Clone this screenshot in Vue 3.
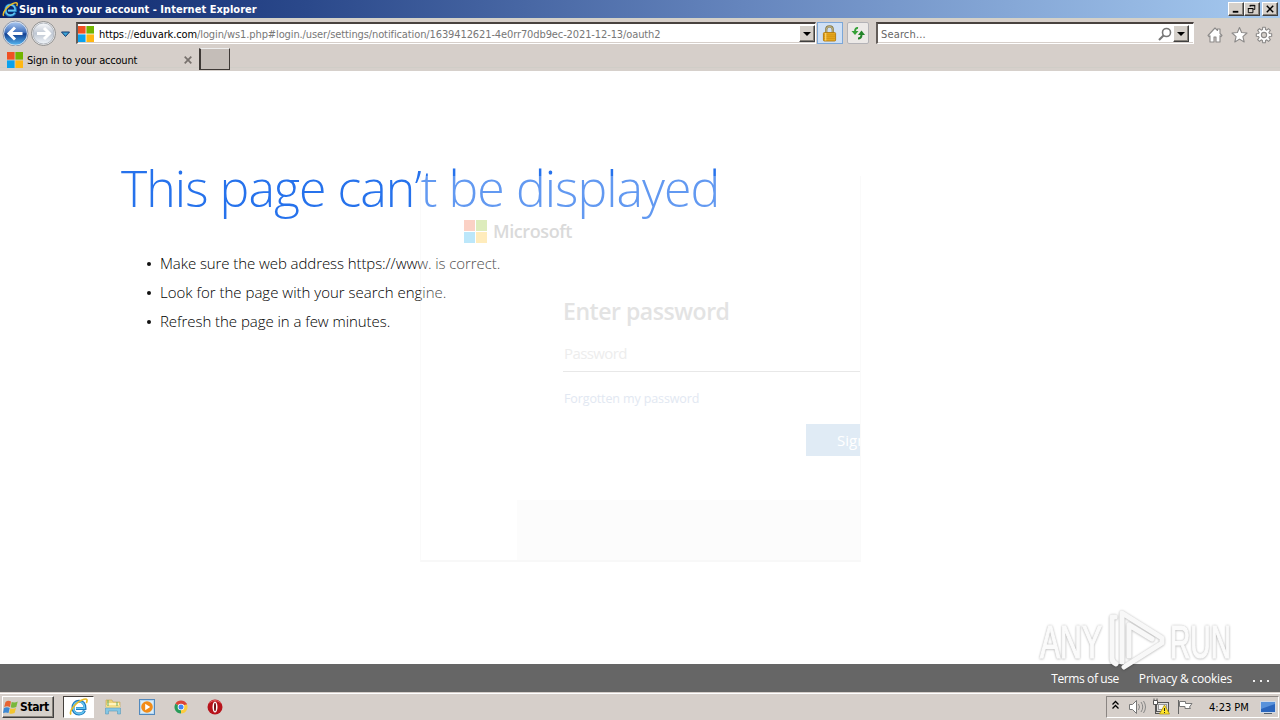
<template>
  <div class="desktop">
    <header class="titlebar">
      <svg class="title-ie" viewBox="0 0 20 20"><use href="#ie" /></svg>
      <span class="title-text">Sign in to your account - Internet Explorer</span>
      <div class="window-buttons">
        <button class="win-btn"><svg viewBox="0 0 15 13"><path d="M4 9.500h6" stroke="#000" stroke-width="2" /></svg></button>
        <button class="win-btn"><svg viewBox="0 0 15 13"><path d="M5.500 4V2.500h5v4.500H9M5 3h6M3.500 6v4.500h5V6zM3 6h6" fill="none" stroke="#000" /></svg></button>
        <button class="win-btn close"><svg viewBox="0 0 15 13"><path d="M4 3l7 7M11 3l-7 7" stroke="#000" stroke-width="1.600" /></svg></button>
      </div>
    </header>

    <nav class="toolbar">
      <svg class="nav-arrows" viewBox="0 0 76 28">
        <defs>
          <linearGradient id="back" x1="0" y1="0" x2="0" y2="1">
            <stop offset="0" stop-color="#a9c6ee" />
            <stop offset=".45" stop-color="#3f70bd" />
            <stop offset=".52" stop-color="#123f91" />
            <stop offset="1" stop-color="#56b4ee" />
          </linearGradient>
          <linearGradient id="forward" x1="0" y1="0" x2="0" y2="1">
            <stop offset="0" stop-color="#fafbfd" />
            <stop offset=".5" stop-color="#bfc7d3" />
            <stop offset="1" stop-color="#f1f5f9" />
          </linearGradient>
        </defs>
        <circle cx="15.500" cy="15.500" r="12.500" fill="#eef2f8" stroke="#8c96a8" />
        <circle cx="15.500" cy="15.500" r="11.300" fill="url(#back)" />
        <path d="M22.500 15.500H9.500M15 9.500l-6 6 6 6" fill="none" stroke="#fff" stroke-width="3" />
        <circle cx="43.500" cy="15.500" r="12" fill="#f4f4f4" stroke="#8d8d8d" />
        <circle cx="43.500" cy="15.500" r="10.500" fill="url(#forward)" stroke="#b3b8c0" />
        <path d="M37 15.500h12M44 10l5.500 5.500L44 21" fill="none" stroke="#fff" stroke-width="3" />
        <path d="M61.500 14h8l-4 4.500z" fill="#3aa3d6" stroke="#143b70" />
      </svg>
      <div class="address">
        <svg class="ms" viewBox="0 0 16 16"><use href="#ms" /></svg>
        <span class="url"><b>https</b>://<b>eduvark.com</b>/login/ws1.php#login./user/settings/notification/1639412621-4e0rr70db9ec-2021-12-13/oauth2</span>
        <button class="drop"><i></i></button>
      </div>
      <div class="lock">
        <svg viewBox="0 0 16 18">
          <path d="M4.500 9V5q0-3.500 3.500-3.500T11.500 5v4" fill="none" stroke="#857849" stroke-width="2.400" />
          <path d="M4.500 9V5q0-3.500 3.500-3.500T11.500 5v4" fill="none" stroke="#d8cd98" stroke-width=".8" />
          <rect x="1.500" y="8" width="13" height="9" rx="1" fill="#e9ab20" stroke="#b27b10" />
          <path d="M2 10.500h12M2 12.500h12M2 14.500h12" stroke="#c8870b" stroke-width=".7" />
          <path d="M4 8.500v8" stroke="#ffe18c" />
        </svg>
      </div>
      <div class="refresh">
        <svg viewBox="0 0 16 16">
          <path d="M8 3Q5 2.500 5 7" fill="none" stroke="#35a137" stroke-width="2" />
          <path d="M1.500 6h7L5 10z" fill="#35a137" />
          <path d="M8 13.500q3.500 0 3.500-4" fill="none" stroke="#228429" stroke-width="2" />
          <path d="M8 10h7l-3.500-4.500z" fill="#228429" />
        </svg>
      </div>
      <div class="search">
        <span>Search...</span>
        <svg class="magnifier" viewBox="0 0 14 14"><circle cx="8.500" cy="5.500" r="4" fill="none" stroke="#777" stroke-width="1.600" /><path d="M5.500 8.500L1 13" stroke="#777" stroke-width="2.200" /></svg>
        <button class="drop"><i></i></button>
      </div>
      <svg class="commands" viewBox="0 0 66 18">
        <g fill="#fff" stroke="#8b8988" stroke-width="1.100" stroke-linejoin="round">
          <path d="M1 9.500L8 2l2.500 2.500V3h2.500v4.500l2 2-1 1.200-1-1V16h-4v-5H7v5H3V9.700l-1 1z" />
          <path d="M32.500 1.500l2.100 5 5.400.5-4.100 3.600 1.300 5.400-4.700-2.900-4.700 2.900 1.300-5.400L25 7l5.400-.5z" />
          <path :d="gearPath" />
          <circle cx="57" cy="9" r="2.600" fill="#d5d0ca" />
        </g>
      </svg>
    </nav>

    <div class="tabs">
      <div class="tab">
        <svg class="ms" viewBox="0 0 16 16"><use href="#ms" /></svg>
        <span>Sign in to your account</span>
        <svg class="tab-close" viewBox="0 0 8 8"><path d="M.7.7l6.600 6.600M7.300.7L.7 7.300" stroke="#77716d" stroke-width="1.700" /></svg>
      </div>
      <div class="new-tab"></div>
    </div>

    <main class="page">
      <h1>This page can’t be displayed</h1>
      <ul>
        <li v-for="tip in tips" :key="tip">{{ tip }}</li>
      </ul>

      <section class="login">
        <div class="brand">
          <svg viewBox="0 0 23 23">
            <path fill="#f25022" d="M0 0h11v11H0z" />
            <path fill="#7fba00" d="M12 0h11v11H12z" />
            <path fill="#00a4ef" d="M0 12h11v11H0z" />
            <path fill="#ffb900" d="M12 12h11v11H12z" />
          </svg>
          <span>Microsoft</span>
        </div>
        <div class="form">
          <h2>Enter password</h2>
          <div class="field"><span>Password</span></div>
          <a class="forgot">Forgotten my password</a>
          <div class="submit">Sign in</div>
        </div>
        <div class="panel"></div>
      </section>

      <div class="watermark">
        <svg viewBox="0 0 200 70">
          <g class="mark-text">
            <text x="3" y="52" textLength="62" lengthAdjust="spacingAndGlyphs">ANY</text>
            <text x="133" y="52" textLength="61" lengthAdjust="spacingAndGlyphs">RUN</text>
          </g>
          <g class="mark-play">
            <path d="M78 11h-3v41q0 4 4 6" />
            <path d="M115 33L92 19v31" />
            <path d="M85 56V7l40 25v5L87 61" />
          </g>
        </svg>
      </div>
    </main>

    <footer class="links">
      <span class="terms">Terms of use</span>
      <span class="privacy">Privacy &amp; cookies</span>
      <span class="more"><i></i><i></i><i></i></span>
    </footer>

    <div class="taskbar">
      <button class="start">
        <svg viewBox="0 0 16 16">
          <path d="M2.500 3Q5 1 8 2.500L7 8Q4 6.500 1.200 8z" fill="#e86432" />
          <path d="M8.700 3q3 1.200 6-.5L13.300 8q-3 1.500-5.600.3z" fill="#78b83c" />
          <path d="M1 9q3-1.500 5.700 0l-1.200 5Q3 13 0 14z" fill="#3c88d3" />
          <path d="M7.400 9.300q3 1.200 5.600-.3l-1.400 5q-3 1.500-5.400.3z" fill="#f3c52f" />
        </svg>
        <span>Start</span>
      </button>
      <div class="task active"><svg viewBox="0 0 20 20"><use href="#ie" /></svg></div>
      <div class="task">
        <svg viewBox="0 0 20 20">
          <path d="M3 5V3h6l1 2h7v5H3z" fill="#efd479" stroke="#c8a54b" stroke-width=".6" />
          <path d="M4 6h12v2H4z" fill="#fff4bf" />
          <path d="M3 8h14v4H3z" fill="#f5de8a" />
          <path d="M2.500 11h15v6h-3v-3h-9v3h-3z" fill="#83c6e5" stroke="#5b9abb" stroke-width=".6" />
          <path d="M5 3v6M14 5v4" stroke="#68ad65" />
        </svg>
      </div>
      <div class="task">
        <svg viewBox="0 0 20 20">
          <rect x="2.500" y="2.500" width="15" height="15" fill="#b7d8f2" stroke="#5289bd" />
          <rect x="4" y="4" width="12" height="12" fill="#d9edf9" />
          <circle cx="10" cy="10" r="5.800" fill="#f28c18" />
          <path d="M8.200 6.800v6.400l5-3.200z" fill="#fff" />
        </svg>
      </div>
      <div class="task">
        <svg viewBox="0 0 20 20">
          <path d="M10 10L4.370 6.750A6.500 6.500 0 0 1 15.630 6.750z" fill="#dc4437" />
          <path d="M10 10L15.630 6.750A6.500 6.500 0 0 1 10 16.500z" fill="#fccc3f" />
          <path d="M10 10v6.500A6.500 6.500 0 0 1 4.370 6.750z" fill="#289b58" />
          <path d="M10 7h5.700" stroke="#dc4437" stroke-width="1.300" />
          <circle cx="10" cy="10" r="3.300" fill="#fff" />
          <circle cx="10" cy="10" r="2.500" fill="#4285f4" />
        </svg>
      </div>
      <div class="task">
        <svg viewBox="0 0 20 20"><circle cx="10" cy="10" r="7.500" fill="#b7131b" /><path d="M4 6q6-5 12 0" fill="none" stroke="#e66164" /><ellipse cx="10" cy="10" rx="2.500" ry="5.500" fill="#fff" /><ellipse cx="10" cy="10" rx="1" ry="4.200" fill="#6e1014" /></svg>
      </div>

      <div class="tray">
        <svg viewBox="0 0 88 18">
          <path d="M5.500 6.500l3-3 3 3M5.500 10.500l3-3 3 3" fill="none" stroke="#000" stroke-width="1.300" />
          <path d="M22.500 6.500h3l4-4v13l-4-4h-3z" fill="#fff" stroke="#777" />
          <path d="M31.500 6q2 3 0 6M34 4q3.500 5 0 10M36.500 3q4 6 0 12" fill="none" stroke="#888" />
          <rect x="49.500" y="4.500" width="12" height="9" fill="#ddd" stroke="#555" />
          <rect x="51.500" y="6.500" width="8" height="5" fill="#f5f5f5" stroke="#999" />
          <path d="M46.500 2.500h4v4h-4zM48.500 6.500v9M47 .5v2M50 .5v2M48 15.500h9" fill="#fff" stroke="#555" />
          <path d="M57.500 7l5 9h-10z" fill="#ffe52c" stroke="#aa8a00" stroke-width=".7" />
          <path d="M57.500 10v3M57.500 14v1" stroke="#222" />
          <path d="M71.500 2v14" stroke="#666" />
          <path d="M72.500 3.500h6v2h6.500l-2.500 3.500 1 1.500h-5.500v-2h-5.500z" fill="#fff" stroke="#777" />
        </svg>
        <span class="clock">4:23 PM</span>
        <svg class="monitor" viewBox="0 0 16 16"><rect x=".5" y="2.500" width="15" height="11" fill="#2b66bd" stroke="#d1dae6" /><path d="M1 3h14v2L1 10z" fill="#5892db" /><path d="M4 14.500h8" stroke="#55616d" /></svg>
      </div>
    </div>

    <!-- shared icons -->
    <svg class="sprite">
      <symbol id="ie" viewBox="0 0 20 20">
        <path d="M15.500 13.500c-1 2.200-2.900 3.500-5.500 3.500-3.800 0-6-2.600-6-6.200C4 7 6.500 4.300 10 4.300c3.900 0 6.200 2.800 6 7.200H7" fill="none" stroke="#1b78bd" stroke-width="3" />
        <path d="M15 14c-1 1.800-2.700 2.700-5 2.700-3.300 0-5.600-2.400-5.600-6 0-3.500 2.200-6 5.600-6 3.500 0 5.500 2.500 5.500 6.500H7" fill="none" stroke="#64c5f1" stroke-width="1.600" />
        <path d="M2 17.500C-.5 14 8 4 15 2.200c3.500-.9 3.500 1.500 2.300 3.800" fill="none" stroke="#e9bb29" stroke-width="1.700" />
      </symbol>
      <symbol id="ms" viewBox="0 0 16 16">
        <path fill="#f05022" d="M0 0h7.600v7.600H0z" />
        <path fill="#72b400" d="M8.400 0H16v7.600H8.400z" />
        <path fill="#09a1ee" d="M0 8.400h7.600V16H0z" />
        <path fill="#ffb713" d="M8.400 8.400H16V16H8.400z" />
      </symbol>
    </svg>
  </div>
</template>

<script setup>
const tips = [
  'Make sure the web address https://www. is correct.',
  'Look for the page with your search engine.',
  'Refresh the page in a few minutes.',
]

// eight teeth, four points each
const points = []
for (let i = 0; i < 8; i++) {
  for (const [offset, radius] of [[-0.27, 5.6], [-0.17, 7.8], [0.17, 7.8], [0.27, 5.6]]) {
    const a = (i * Math.PI) / 4 + offset
    points.push(`${(57 + Math.cos(a) * radius).toFixed(2)} ${(9 + Math.sin(a) * radius).toFixed(2)}`)
  }
}
const gearPath = `M${points.join('L')}z`
</script>

<style>
body {
  margin: 0;
  overflow: hidden;
}
</style>

<style scoped>
* {
  box-sizing: border-box;
}

svg {
  display: block;
  flex-shrink: 0;
}

.desktop {
  width: 1280px;
  height: 720px;
  display: flex;
  flex-direction: column;
  background: #fff;
  font: 11px "DejaVu Sans Condensed", "DejaVu Sans", sans-serif;
  font-stretch: condensed;
  color: #000;
  white-space: nowrap;
}

.sprite {
  position: absolute;
  width: 0;
  height: 0;
}

.titlebar {
  height: 18px;
  flex-shrink: 0;
  display: flex;
  align-items: center;
  padding: 0 2px;
  background: linear-gradient(90deg, #0a246a, #2b498b 24%, #6585bd 58%, #a6caf0);
}

.title-ie {
  width: 17px;
  height: 17px;
}

.title-text {
  color: #fff;
  font-weight: bold;
  letter-spacing: 0.03px;
}

.window-buttons {
  display: flex;
  margin-left: auto;
}

button {
  padding: 0;
  background: #d5d0ca;
  border: 1px solid;
  border-color: #fff #404040 #404040 #fff;
  box-shadow: inset -1px -1px #858079;
  color: #000;
}

.win-btn {
  width: 16px;
  height: 14px;
}

.win-btn svg {
  width: 14px;
  height: 12px;
}

.win-btn.close {
  margin-left: 2px;
}

.toolbar {
  height: 29px;
  flex-shrink: 0;
  display: flex;
  align-items: flex-start;
  background: #d6cfca;
  border-top: 1px solid #d2d2c7;
}

.nav-arrows {
  width: 76px;
  height: 28px;
  margin-top: -1px;
}

.address,
.search {
  height: 22px;
  margin-top: 3px;
  display: flex;
  align-items: center;
  background: #fff;
  border: 1px solid #fff;
  border-top: 2px solid #49423f;
  border-left: 2px solid #635d59;
  box-shadow: inset 0 -1px #d6cfca;
}

.address {
  width: 740px;
}

.ms {
  width: 16px;
  height: 16px;
}

.url {
  margin: 1px 0 0 5px;
  color: #777;
  letter-spacing: -0.11px;
}

.url b {
  font-weight: normal;
  color: #000;
}

.drop {
  width: 16px;
  height: 17px;
  margin-left: auto;
  display: flex;
  align-items: center;
  justify-content: center;
}

.drop i {
  border: 4px solid transparent;
  border-top-color: #000;
  border-bottom: 0;
}

.lock,
.refresh {
  height: 22px;
  margin-top: 3px;
  display: flex;
  align-items: center;
  justify-content: center;
}

.lock {
  width: 26px;
  margin-left: 1px;
  background: #cfe0f5;
  border: 1px solid #7ca7d8;
}

.lock svg {
  width: 15px;
  height: 17px;
  margin-right: 1px;
}

.refresh {
  width: 22px;
  margin-left: 4px;
  background: #ece9e7;
  border: 1px solid #b4b3b7;
  border-radius: 2px;
}

.refresh svg {
  width: 16px;
  height: 16px;
}

.search {
  width: 318px;
  margin-left: 7px;
  padding: 0 4px 0 3px;
  color: #666;
}

.search span {
  margin-top: 1px;
  letter-spacing: 0.15px;
}

.magnifier {
  width: 14px;
  height: 14px;
  margin-left: auto;
}

.search .drop {
  margin-left: 1px;
}

.commands {
  width: 66px;
  height: 18px;
  margin: 7px 0 0 13px;
}

.tabs {
  height: 24px;
  flex-shrink: 0;
  display: flex;
  background: linear-gradient(#d6cfca 20px, #d0cdc7 20px, #d0cdc7 21px, #d6d0cb 21px);
}

.tab {
  width: 199px;
  display: flex;
  align-items: center;
  padding: 2px 7px 0 7px;
}

.tab span {
  margin-left: 4px;
  letter-spacing: -0.2px;
}

.tab-close {
  width: 8px;
  height: 8px;
  margin-left: auto;
}

.new-tab {
  width: 31px;
  height: 22px;
  margin-top: 1px;
  background: #c4bdb8;
  border: 1px solid #3e3936;
  border-width: 1px 1px 1px 2px;
  border-top-color: #eee;
}

.page {
  height: 593px;
  flex-shrink: 0;
  position: relative;
  padding-left: 121px;
  font-stretch: normal;
}

h1 {
  margin: 83px 0 0;
  line-height: 68px;
  font-family: "Open Sans", "Noto Sans", sans-serif;
  font-size: 50px;
  font-weight: 300;
  letter-spacing: -0.95px;
  color: #2672ec;
}

ul {
  margin: 27px 0 0;
  padding: 0;
  list-style: none;
  font: 300 15px/29px "Open Sans", "Noto Sans", sans-serif;
}

li {
  display: flex;
  align-items: center;
  padding-left: 26px;
}

li:first-child {
  letter-spacing: -0.08px;
}

li:last-child {
  letter-spacing: -0.05px;
}

li::before {
  content: "";
  width: 4px;
  height: 4px;
  margin-right: 9px;
  border-radius: 50%;
  background: #111;
}

.login {
  position: absolute;
  left: 420px;
  top: 105px;
  width: 441px;
  height: 386px;
  overflow: hidden;
  background: rgba(255, 255, 255, 0.28);
  border: 1px solid rgba(0, 0, 0, 0.02);
  border-top: 0;
  border-bottom: 2px solid rgba(0, 0, 0, 0.025);
  font-family: "Open Sans", "Noto Sans", sans-serif;
}

.brand {
  display: flex;
  align-items: center;
  margin: 44px 0 0 43px;
}

.brand svg {
  width: 23px;
  height: 23px;
  opacity: 0.26;
}

.brand span {
  margin-left: 6px;
  font-size: 18px;
  line-height: 23px;
  font-weight: 600;
  letter-spacing: -0.4px;
  color: #dadada;
}

.form {
  margin-left: 142px;
}

h2 {
  margin: 51px 0 0;
  font-size: 23px;
  line-height: 34px;
  font-weight: 600;
  letter-spacing: -0.45px;
  color: #e3e3e3;
}

.field {
  height: 44px;
  padding: 15px 0 0 1px;
  border-bottom: 1px solid #e8e8e8;
  font-size: 15px;
  line-height: 20px;
  letter-spacing: -0.6px;
  color: #ededed;
}

.forgot {
  display: block;
  margin: 17px 0 0 1px;
  font-size: 12.5px;
  line-height: 20px;
  letter-spacing: -0.12px;
  color: #e2e8f2;
}

.submit {
  width: 108px;
  height: 32px;
  margin: 15px 0 0 243px;
  padding-left: 31px;
  background: #e0ebf5;
  color: #fff;
  font-size: 15px;
  line-height: 33px;
}

.panel {
  height: 60px;
  margin: 44px 0 0 96px;
  background: #fcfcfc;
}

.watermark {
  position: absolute;
  left: 1037px;
  top: 535px;
  width: 200px;
  height: 70px;
  z-index: 1;
}

.watermark svg {
  width: 200px;
  height: 70px;
  overflow: visible;
  filter: drop-shadow(0 0 1px rgba(0, 0, 0, 0.22)) drop-shadow(0 1px 1px rgba(0, 0, 0, 0.12));
}

.mark-text {
  font-family: "Liberation Sans", Arial, sans-serif;
  font-size: 46px;
  fill: #fbfbfb;
  stroke: #fbfbfb;
  stroke-width: 1.2px;
}

.mark-play {
  fill: none;
  stroke: #f8f8f8;
  stroke-width: 5px;
  stroke-linejoin: round;
  stroke-linecap: round;
}

.links {
  height: 28px;
  flex-shrink: 0;
  display: flex;
  align-items: center;
  justify-content: flex-end;
  padding: 1px 11px 0 0;
  background: #666;
  color: #fff;
  font: 12px "Open Sans", "Noto Sans", sans-serif;
}

.terms {
  letter-spacing: -0.4px;
}

.privacy {
  margin-left: 20px;
  letter-spacing: -0.2px;
}

.more {
  display: flex;
  gap: 5px;
  margin: 5px 0 0 21px;
}

.more i {
  width: 2px;
  height: 2px;
  background: #eee;
}

.taskbar {
  height: 28px;
  flex-shrink: 0;
  display: flex;
  align-items: flex-start;
  padding: 4px 1px 0 2px;
  background: linear-gradient(#d6cfca 1px, #fff 1px, #fff 2px, #d6cfca 2px);
}

.start {
  width: 52px;
  height: 22px;
  display: flex;
  align-items: center;
  font: bold 12px "DejaVu Sans Condensed", "DejaVu Sans", sans-serif;
  font-stretch: condensed;
  letter-spacing: -0.4px;
}

.start svg {
  width: 16px;
  height: 16px;
  margin-right: 1px;
}

.task {
  width: 30px;
  height: 22px;
  margin-left: 4px;
  display: flex;
  align-items: center;
  justify-content: center;
}

.task svg {
  width: 20px;
  height: 20px;
}

.task.active {
  width: 31px;
  margin-left: 9px;
  background: #fff;
  border: 1px solid;
  border-color: #45403d #fff #fff #45403d;
}

.tray {
  width: 173px;
  height: 22px;
  margin-left: auto;
  display: flex;
  align-items: center;
  border: 1px solid;
  border-color: #8a8582 #fff #fff #8a8582;
}

.tray svg {
  width: 88px;
  height: 18px;
}

.clock {
  margin-left: 14px;
  letter-spacing: 0;
}

.tray .monitor {
  width: 16px;
  height: 16px;
  margin-left: auto;
  margin-right: 2px;
}
</style>
